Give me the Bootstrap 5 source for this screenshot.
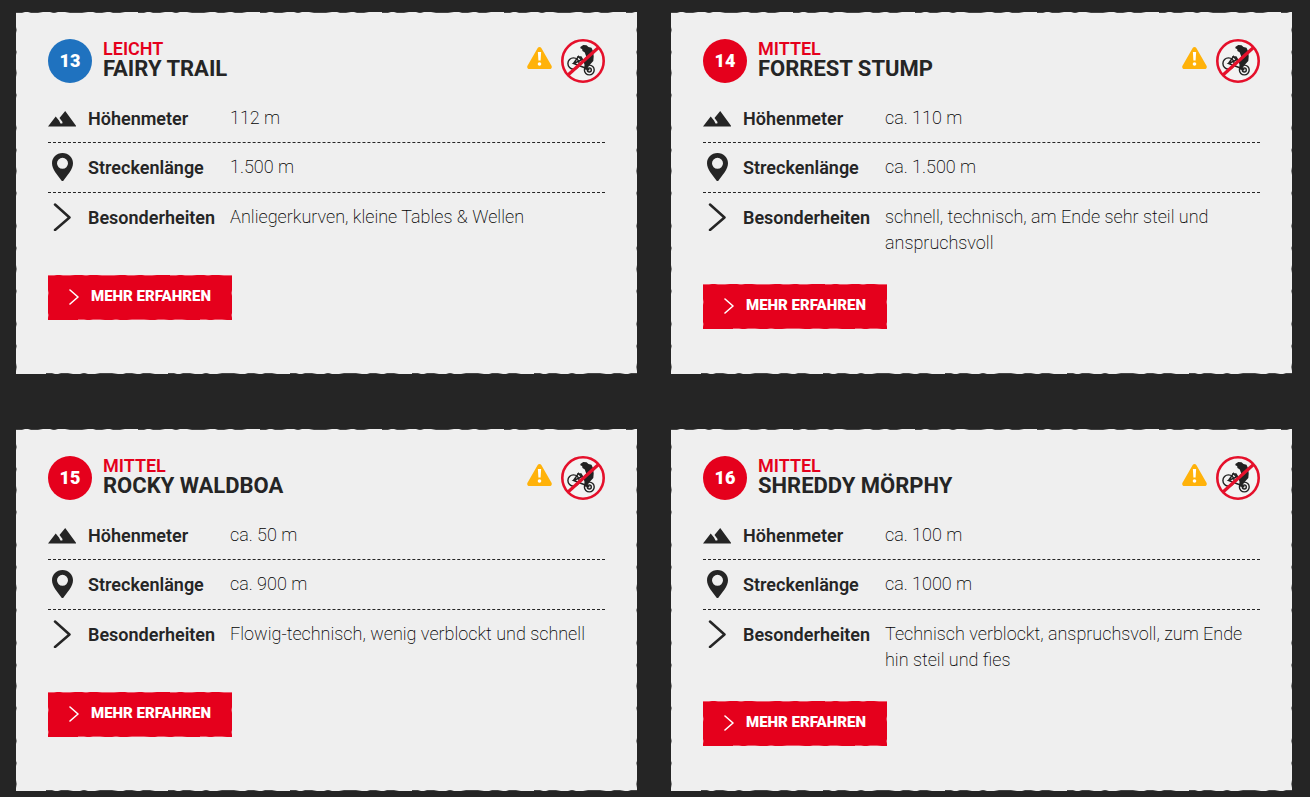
<!DOCTYPE html>
<html lang="de">
<head>
<meta charset="utf-8">
<meta name="viewport" content="width=device-width, initial-scale=1">
<title>Trails</title>
<link href="https://cdn.jsdelivr.net/npm/bootstrap@5.3.0/dist/css/bootstrap.min.css" rel="stylesheet">
<style>
:root { --ink: #252525; --paper: #efefef; --red: #e5001c; --blue: #1f72bf; }
body { background: var(--ink); color: var(--ink); font-family: Roboto, "Liberation Sans", sans-serif; font-size: 18px; line-height: 26px; }
.trail-list { padding: 12px 18px 6px 16px; }
.trail-grid { display: grid; grid-template-columns: 1fr; column-gap: 34px; row-gap: 55px; }
@media (min-width: 992px) { .trail-grid { grid-template-columns: 1fr 1fr; } }
/* torn paper edge: broken one-pixel strips along each side */
.torn {
  --h: repeating-linear-gradient(90deg, var(--edge) 0 6px, transparent 9px 12px, var(--edge) 15px 22px, transparent 27px 34px, var(--edge) 37px 39px, transparent 42px 49px, var(--edge) 54px 66px, transparent 72px 77px, var(--edge) 80px 86px, transparent 91px 94px, var(--edge) 97px 104px, transparent 109px 122px);
  --v: repeating-linear-gradient(180deg, transparent 0 15px, var(--side) 18px, transparent 21px 38px, var(--side) 40px, transparent 43px 57px, var(--side) 61px, transparent 65px 81px, var(--side) 83px, transparent 86px 98px);
  background: var(--h) 0 0 / 100% 1px no-repeat, var(--h) 30px 100% / 100% 1px no-repeat, var(--v) 0 0 / 1px 100% no-repeat, var(--v) 100% 0 / 1px 100% no-repeat, var(--fill);
}
.trail { --fill: var(--paper); --edge: #444; --side: #777; padding: 27px 32px 45px; }
.number { width: 44px; height: 44px; border-radius: 50%; background: var(--red); color: #fff; font-weight: 900; }
.number.easy { background: var(--blue); }
.heading { padding: 0 0 4px 11px; }
.level { color: var(--red); font-size: 18px; font-weight: 600; line-height: 20px; }
.name { font-size: 22px; font-weight: 700; line-height: 20px; }
.signs { gap: 9px; }
.warn { margin-bottom: 6px; }
.facts { margin: 11px 0 28px; }
.fact { min-height: 50px; padding-top: 11px; border-bottom: 1px dashed var(--ink); }
.fact:first-child { min-height: 49px; }
.fact:last-child { min-height: 54px; border-bottom: 0; }
.fact svg { width: 28px; height: 28px; margin: -1px 12px 0 0; }
.fact dt { width: 142px; font-weight: 600; padding-top: 1px; }
.fact dd { font-weight: 200; color: #000; }
.more { --fill: var(--red); --edge: #ee5a6c; --side: #ee5a6c; height: 45px; padding: 0 21px 2px 21px; border: 0; border-radius: 0; color: #fff; font-size: 15px; font-weight: 900; }
.more:hover { color: #fff; text-decoration: underline; }
</style>
</head>
<body>
<svg class="d-none" aria-hidden="true">
  <symbol id="peaks" viewBox="0 0 28 28"><path fill="currentColor" d="M0 22.500 7.700 12.500 11 16.500 12.500 19.500 14.300 19.500 14.500 18 11.500 14 17.200 7 28.500 22.500Z"/></symbol>
  <symbol id="pin" viewBox="0 0 28 28"><path fill="currentColor" fill-rule="evenodd" d="M14.500 0C8.500 0 4 4.400 4 10.200 4 17 10 22 14.500 29 19 22 25 17 25 10.200 25 4.400 20.500 0 14.500 0Zm0 4.800a5.500 5.500 0 1 1 0 11 5.500 5.500 0 0 1 0-11Z"/></symbol>
  <symbol id="arrow" viewBox="0 0 28 28"><path fill="none" stroke="currentColor" stroke-width="2.500" stroke-linecap="round" stroke-linejoin="round" d="m7 1.500 14.500 13L7 27"/></symbol>
  <symbol id="warning" viewBox="0 0 25 22"><path fill="#ffb20a" d="M10.700 1.100c.8-1.400 2.800-1.400 3.600 0l10.200 17.700c.8 1.400-.1 3.200-1.800 3.200H2.300C.6 22-.3 20.200.5 18.800Z"/><path fill="#fff" d="M10.900 5h3.200l-.5 8.600h-2.200Z"/><circle cx="12.500" cy="17" r="1.800" fill="#fff"/></symbol>
  <symbol id="nobike" viewBox="0 0 44 44">
    <circle cx="22" cy="22" r="20.700" fill="#f3f3f3"/>
    <g fill="none" stroke="#222" stroke-width="1.400"><circle cx="12.500" cy="24.500" r="5.600"/><circle cx="28.300" cy="31" r="4.900"/><circle cx="28.300" cy="31" r="2"/><path d="m12.500 24.500 5-7 3 3.500-8 3.500 10.500 4 5.300 2.500M16 18h4l5 8"/></g>
    <path fill="#222" d="m19.300 8 3-2 3.200.3 2 1.700 3 .8 1.700 3.800.5 5-.4 4.500-3 3.200-2.300 3-.7 2.500-3.300-.4.500-4.500-.4-5 2.100-3.300-1.400-4-2.300-1.700-.4-2-1.500-.4Z"/>
    <circle cx="22" cy="22" r="20.700" fill="none" stroke="#e5102b" stroke-width="2.600"/>
    <path stroke="#e5102b" stroke-width="3.200" d="M7 36 37.500 8.500"/>
  </symbol>
  <symbol id="next" viewBox="0 0 10 16"><path fill="none" stroke="currentColor" stroke-width="1.600" stroke-linecap="round" stroke-linejoin="round" d="m1 1 8 7-8 7"/></symbol>
</svg>

<main class="trail-list">
  <div class="trail-grid">
    <article class="trail torn">
      <header class="d-flex align-items-center">
        <span class="number easy d-flex align-items-center justify-content-center flex-shrink-0">13</span>
        <div class="heading flex-grow-1"><div class="level">LEICHT</div><h2 class="name mb-0">FAIRY TRAIL</h2></div>
        <div class="signs d-flex align-items-center"><svg class="warn" width="25" height="22" role="img" aria-label="Warnung"><use href="#warning"/></svg><svg width="44" height="44" role="img" aria-label="Gesperrt"><use href="#nobike"/></svg></div>
      </header>
      <dl class="facts">
        <div class="fact d-flex"><svg class="flex-shrink-0"><use href="#peaks"/></svg><dt class="flex-shrink-0">Höhenmeter</dt><dd class="mb-0">112 m</dd></div>
        <div class="fact d-flex"><svg class="flex-shrink-0"><use href="#pin"/></svg><dt class="flex-shrink-0">Streckenlänge</dt><dd class="mb-0">1.500 m</dd></div>
        <div class="fact d-flex"><svg class="flex-shrink-0"><use href="#arrow"/></svg><dt class="flex-shrink-0">Besonderheiten</dt><dd class="mb-0">Anliegerkurven, kleine Tables &amp; Wellen</dd></div>
      </dl>
      <a href="#" class="more torn btn d-inline-flex align-items-center"><svg class="me-2" width="10" height="16"><use href="#next"/></svg><span class="ps-1">MEHR ERFAHREN</span></a>
    </article>

    <article class="trail torn">
      <header class="d-flex align-items-center">
        <span class="number d-flex align-items-center justify-content-center flex-shrink-0">14</span>
        <div class="heading flex-grow-1"><div class="level">MITTEL</div><h2 class="name mb-0">FORREST STUMP</h2></div>
        <div class="signs d-flex align-items-center"><svg class="warn" width="25" height="22" role="img" aria-label="Warnung"><use href="#warning"/></svg><svg width="44" height="44" role="img" aria-label="Gesperrt"><use href="#nobike"/></svg></div>
      </header>
      <dl class="facts">
        <div class="fact d-flex"><svg class="flex-shrink-0"><use href="#peaks"/></svg><dt class="flex-shrink-0">Höhenmeter</dt><dd class="mb-0">ca. 110 m</dd></div>
        <div class="fact d-flex"><svg class="flex-shrink-0"><use href="#pin"/></svg><dt class="flex-shrink-0">Streckenlänge</dt><dd class="mb-0">ca. 1.500 m</dd></div>
        <div class="fact d-flex"><svg class="flex-shrink-0"><use href="#arrow"/></svg><dt class="flex-shrink-0">Besonderheiten</dt><dd class="mb-0">schnell, technisch, am Ende sehr steil und anspruchsvoll</dd></div>
      </dl>
      <a href="#" class="more torn btn d-inline-flex align-items-center"><svg class="me-2" width="10" height="16"><use href="#next"/></svg><span class="ps-1">MEHR ERFAHREN</span></a>
    </article>

    <article class="trail torn">
      <header class="d-flex align-items-center">
        <span class="number d-flex align-items-center justify-content-center flex-shrink-0">15</span>
        <div class="heading flex-grow-1"><div class="level">MITTEL</div><h2 class="name mb-0">ROCKY WALDBOA</h2></div>
        <div class="signs d-flex align-items-center"><svg class="warn" width="25" height="22" role="img" aria-label="Warnung"><use href="#warning"/></svg><svg width="44" height="44" role="img" aria-label="Gesperrt"><use href="#nobike"/></svg></div>
      </header>
      <dl class="facts">
        <div class="fact d-flex"><svg class="flex-shrink-0"><use href="#peaks"/></svg><dt class="flex-shrink-0">Höhenmeter</dt><dd class="mb-0">ca. 50 m</dd></div>
        <div class="fact d-flex"><svg class="flex-shrink-0"><use href="#pin"/></svg><dt class="flex-shrink-0">Streckenlänge</dt><dd class="mb-0">ca. 900 m</dd></div>
        <div class="fact d-flex"><svg class="flex-shrink-0"><use href="#arrow"/></svg><dt class="flex-shrink-0">Besonderheiten</dt><dd class="mb-0">Flowig-technisch, wenig verblockt und schnell</dd></div>
      </dl>
      <a href="#" class="more torn btn d-inline-flex align-items-center"><svg class="me-2" width="10" height="16"><use href="#next"/></svg><span class="ps-1">MEHR ERFAHREN</span></a>
    </article>

    <article class="trail torn">
      <header class="d-flex align-items-center">
        <span class="number d-flex align-items-center justify-content-center flex-shrink-0">16</span>
        <div class="heading flex-grow-1"><div class="level">MITTEL</div><h2 class="name mb-0">SHREDDY MÖRPHY</h2></div>
        <div class="signs d-flex align-items-center"><svg class="warn" width="25" height="22" role="img" aria-label="Warnung"><use href="#warning"/></svg><svg width="44" height="44" role="img" aria-label="Gesperrt"><use href="#nobike"/></svg></div>
      </header>
      <dl class="facts">
        <div class="fact d-flex"><svg class="flex-shrink-0"><use href="#peaks"/></svg><dt class="flex-shrink-0">Höhenmeter</dt><dd class="mb-0">ca. 100 m</dd></div>
        <div class="fact d-flex"><svg class="flex-shrink-0"><use href="#pin"/></svg><dt class="flex-shrink-0">Streckenlänge</dt><dd class="mb-0">ca. 1000 m</dd></div>
        <div class="fact d-flex"><svg class="flex-shrink-0"><use href="#arrow"/></svg><dt class="flex-shrink-0">Besonderheiten</dt><dd class="mb-0">Technisch verblockt, anspruchsvoll, zum Ende hin steil und fies</dd></div>
      </dl>
      <a href="#" class="more torn btn d-inline-flex align-items-center"><svg class="me-2" width="10" height="16"><use href="#next"/></svg><span class="ps-1">MEHR ERFAHREN</span></a>
    </article>
  </div>
</main>
<script src="https://cdn.jsdelivr.net/npm/bootstrap@5.3.0/dist/js/bootstrap.bundle.min.js"></script>
</body>
</html>
